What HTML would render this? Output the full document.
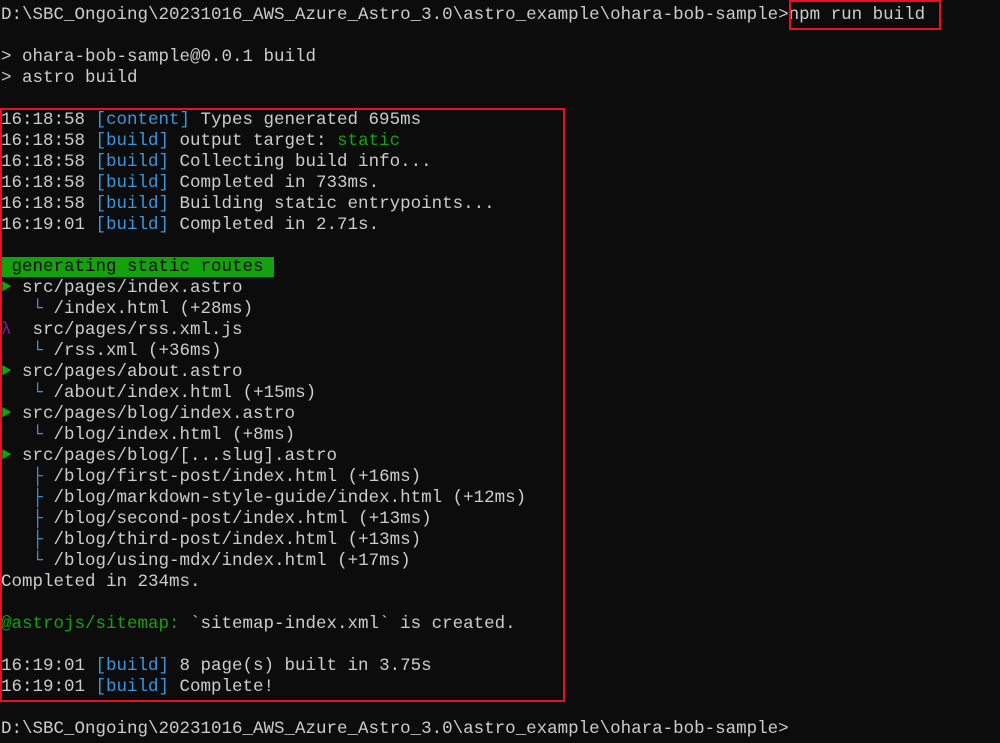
<!DOCTYPE html>
<html><head><meta charset="utf-8"><style>
html,body{margin:0;padding:0;background:#0c0c0c;width:1000px;height:743px;overflow:hidden}
pre{position:absolute;left:1px;top:5px;margin:0;font-family:"Liberation Mono","Noto Sans CJK SC",monospace;font-size:17.5px;line-height:21px;color:#cccccc;letter-spacing:0}
.c{color:#3a96dd}.g{color:#13a10e}.p{color:#881798}
.t{color:#13a10e;font-size:11px;display:inline-block;width:10.5px;overflow:hidden;vertical-align:top;line-height:21px}
.hl{background:#13a10e;color:#0c0c0c}
.box{position:absolute;border:2px solid #e81123}
</style></head><body>
<pre>D:\SBC_Ongoing\20231016_AWS_Azure_Astro_3.0\astro_example\ohara-bob-sample&gt;npm run build

&gt; ohara-bob-sample@0.0.1 build
&gt; astro build

16:18:58 <span class="c">[content]</span> Types generated 695ms
16:18:58 <span class="c">[build]</span> output target: <span class="g">static</span>
16:18:58 <span class="c">[build]</span> Collecting build info...
16:18:58 <span class="c">[build]</span> Completed in 733ms.
16:18:58 <span class="c">[build]</span> Building static entrypoints...
16:19:01 <span class="c">[build]</span> Completed in 2.71s.

<span class="hl"> generating static routes </span>
<span class="t">▶</span> src/pages/index.astro
   <span class="c">└</span> /index.html (+28ms)
<span class="p">λ</span>  src/pages/rss.xml.js
   <span class="c">└</span> /rss.xml (+36ms)
<span class="t">▶</span> src/pages/about.astro
   <span class="c">└</span> /about/index.html (+15ms)
<span class="t">▶</span> src/pages/blog/index.astro
   <span class="c">└</span> /blog/index.html (+8ms)
<span class="t">▶</span> src/pages/blog/[...slug].astro
   <span class="c">├</span> /blog/first-post/index.html (+16ms)
   <span class="c">├</span> /blog/markdown-style-guide/index.html (+12ms)
   <span class="c">├</span> /blog/second-post/index.html (+13ms)
   <span class="c">├</span> /blog/third-post/index.html (+13ms)
   <span class="c">└</span> /blog/using-mdx/index.html (+17ms)
Completed in 234ms.

<span class="g">@astrojs/sitemap:</span> `sitemap-index.xml` is created.

16:19:01 <span class="c">[build]</span> 8 page(s) built in 3.75s
16:19:01 <span class="c">[build]</span> Complete!

D:\SBC_Ongoing\20231016_AWS_Azure_Astro_3.0\astro_example\ohara-bob-sample&gt;</pre>
<div class="box" style="left:789px;top:0;width:148px;height:26px"></div>
<div class="box" style="left:0;top:108px;width:561px;height:590px"></div>
</body></html>
